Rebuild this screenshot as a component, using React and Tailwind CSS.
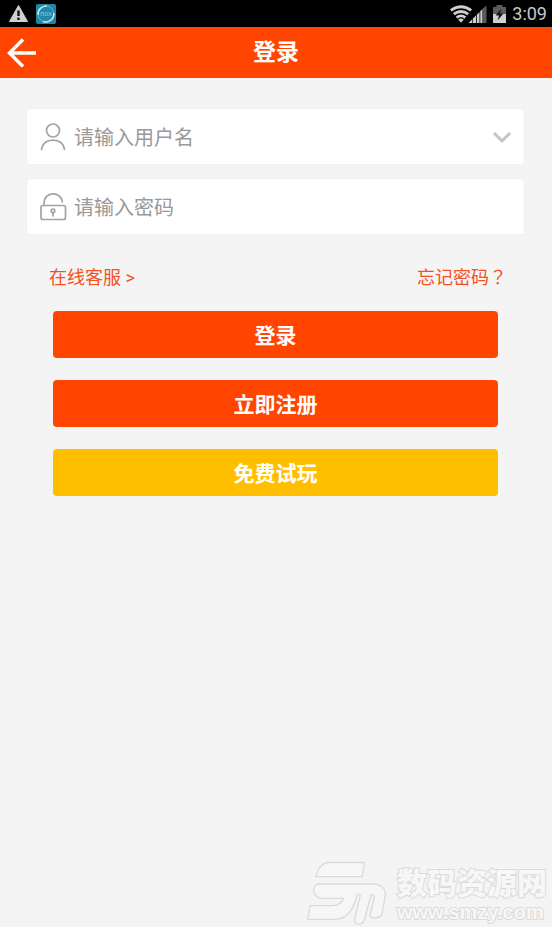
import React, {useState} from "react";

const StatusBar = () => {
    return (
        <div className="flex h-[27px] items-center justify-between bg-black pl-2 pr-[5px]">
            <div className="flex items-center gap-2">
                <svg width="20" height="20" viewBox="0 0 20 20">
                    <path d="M10.5 1.5 L19.5 17.5 H1.5 Z" fill="#d0d0d0" stroke="#d0d0d0" strokeLinejoin="round"/>
                    <path d="M10.5 6.5 V12" stroke="#111" strokeWidth="2.4"/>
                    <rect x="9.3" y="13.6" width="2.4" height="2.4" fill="#111"/>
                </svg>
                <svg width="20" height="20" viewBox="0 0 20 20">
                    <rect width="20" height="20" rx="2" fill="#1f87a3"/>
                    <circle cx="10" cy="10" r="8" fill="#2088a8" stroke="#5fb0c8" strokeWidth="1"/>
                    <path d="M2.2 11 A8 8 0 0 1 11 2 M17.8 9 A8 8 0 0 1 7 17.4" fill="none" stroke="#c3e4ec" strokeWidth="1.6"/>
                    <text x="10" y="12.3" textAnchor="middle" fontSize="7" fill="#8ccbdc" className="font-['Liberation_Sans',sans-serif]">nox</text>
                </svg>
            </div>
            <div className="flex items-center">
                <svg width="22" height="18" viewBox="0 0 22 18" fill="none" stroke="#cfcfcf" strokeWidth="2.8">
                    <path d="M0.8 5.4 Q11 -2 21.2 5.4"/>
                    <path d="M3.8 9.2 Q11 3.8 18.2 9.2"/>
                    <path d="M6.6 12.6 Q11 9.2 15.4 12.6"/>
                    <path d="M8.2 14.4 Q11 12.4 13.8 14.4 L11 17.8 Z" fill="#cfcfcf" stroke="none"/>
                </svg>
                <svg className="-ml-1" width="20" height="18" viewBox="0 0 20 18">
                    <path d="M0.5 18 L4 14.5 V18 Z M4.7 13.8 L8 10.5 V18 H4.7 Z M8.8 9.7 L11.5 7 V18 H8.8 Z" fill="#cfcfcf"/>
                    <path d="M12.3 6.2 L14.5 4 V18 H12.3 Z" fill="#cfcfcf"/>
                    <path d="M14.5 4 L18.5 0.5 V18 H14.5 Z" fill="#5a5a5a"/>
                </svg>
                <svg className="ml-[5px]" width="13" height="18" viewBox="0 0 13 18">
                    <path d="M3.5 0 H9.5 V2 H13 V9 H0 V2 H3.5 Z" fill="#5c5c5c"/>
                    <path d="M0 9 H13 V18 H0 Z" fill="#cfcfcf"/>
                    <path d="M8.5 3.5 L2.5 10.5 H6 L4.5 15.5 L10.5 8.5 H7 Z" fill="#151515"/>
                </svg>
                <span className="ml-[6px] font-['Roboto',sans-serif] text-lg leading-[26px] text-[#c8c8c8]">3:09</span>
            </div>
        </div>
    );
};

const UserIcon = () => (
    <svg width="28" height="28" viewBox="0 0 28 28" fill="none" stroke="#a3a3a3" strokeWidth="1.7" strokeLinecap="round">
        <circle cx="14" cy="7.5" r="6.5"/>
        <path d="M2.5 26.5 C3.5 20.5 8 17.2 14 17.2 C20 17.2 24.5 20.5 25.5 26.5"/>
    </svg>
);

const LockIcon = () => (
    <svg width="28" height="28" viewBox="0 0 28 28" fill="none" stroke="#a3a3a3" strokeWidth="1.7" strokeLinecap="round">
        <rect x="2" y="12.5" width="24.5" height="14" rx="2"/>
        <path d="M5 12.5 V10.5 C5 -2 22 -2 23.4 8.8"/>
        <circle cx="14" cy="17.8" r="1.8"/>
        <path d="M14 19.8 V22.8"/>
    </svg>
);

const Watermark = () => (
    <div className="pointer-events-none absolute right-[5px] bottom-0 flex items-center gap-[9px]">
        <svg width="82" height="66" viewBox="0 0 82 66" fill="#f6f6f6" stroke="#dadada" strokeWidth="1.3" strokeLinejoin="round">
            <path d="M10 15.7 C11 9 15 2.5 22 1.5 H58.5 L56.3 15.7 Z"/>
            <path d="M11.7 23 H66 C75 23 80.5 28 79.3 35 L76 53 C75 57.5 64 58 64 54.5 L68.3 36.5 C68.5 34.5 66 33 65 34 L58.5 58.5 C57 64.5 47.5 65 48.5 58.5 L54.3 34.5 C54.3 33 51.5 33 51 34 C48 46 43 57.5 30 58.3 H1.7 L4.3 44.7 H26.5 C32 44.7 36 41.5 37.5 37.3 H16 C6 36 5.5 26 11.7 23 Z"/>
        </svg>
        <div className="flex flex-col pt-0.5 text-[#f7f7f7] [-webkit-text-stroke:2px_#dadada] [paint-order:stroke_fill]">
            <span className="font-['Liberation_Sans','Noto_Sans_CJK_SC',sans-serif] text-[30px] leading-[34px] font-black">数码资源网</span>
            <span className="font-['Liberation_Sans',sans-serif] text-xl leading-[22px] font-bold">www.smzy.com</span>
        </div>
    </div>
);

const Login = () => {
    const [username, setUsername] = useState("");
    const [password, setPassword] = useState("");

    const handleSubmit = (e) => {
        e.preventDefault();
    };

    const inputClass = "min-w-0 flex-grow bg-transparent pt-0.5 text-xl text-[#333] placeholder:text-[#999] outline-none";
    const rowClass = "flex h-[57px] items-center gap-[7px] rounded-sm border border-[#f0f0f0] bg-white px-3";
    const buttonClass = "h-[47px] w-full rounded pt-0.5 text-[21px] leading-7 font-bold text-white";

    return (
        <div className="relative flex min-h-screen flex-col bg-[#f4f4f4] font-['Roboto','Noto_Sans_CJK_SC',sans-serif]">
            <StatusBar/>
            <header className="grid h-[51px] grid-cols-[1fr_auto_1fr] items-center bg-[#ff4500] px-[7px] text-white">
                <button type="button" aria-label="返回" className="justify-self-start">
                    <svg width="30" height="30" viewBox="0 0 30 30" fill="none" stroke="#fff" strokeWidth="3.4">
                        <path d="M29 15 H2.5 M16 1.5 L2.5 15 L16 28.5"/>
                    </svg>
                </button>
                <h1 className="text-[23px] leading-8 font-bold">登录</h1>
            </header>

            <form onSubmit={handleSubmit} className="pt-[30px] pr-[27px] pl-[26px]">
                <div className="flex flex-col gap-[13px]">
                    <div className={rowClass}>
                        <label htmlFor="username" aria-label="用户名"><UserIcon/></label>
                        <input
                            id="username"
                            type="text"
                            placeholder="请输入用户名"
                            value={username}
                            onChange={(e) => setUsername(e.target.value)}
                            className={inputClass}
                        />
                        <button type="button" aria-label="历史账号">
                            <svg width="20" height="20" viewBox="0 0 20 20" fill="none" stroke="#c4c4c4" strokeWidth="3">
                                <path d="M2 6 L10 14 L18 6"/>
                            </svg>
                        </button>
                    </div>
                    <div className={rowClass}>
                        <label htmlFor="password" aria-label="密码"><LockIcon/></label>
                        <input
                            id="password"
                            type="password"
                            placeholder="请输入密码"
                            value={password}
                            onChange={(e) => setPassword(e.target.value)}
                            className={inputClass}
                        />
                    </div>
                </div>

                <div className="mt-[30px] flex justify-between pr-[18px] pl-[23px] text-lg leading-[26px] text-[#f4511e]">
                    <a href="#service">在线客服 &gt;</a>
                    <a href="#forgot">忘记密码<span className="font-['Roboto','Noto_Sans_CJK_JP',sans-serif]">？</span></a>
                </div>

                <div className="mt-5 flex flex-col gap-[22px] px-[27px]">
                    <button type="submit" className={`${buttonClass} bg-[#ff4500]`}>登录</button>
                    <button type="button" className={`${buttonClass} bg-[#ff4500]`}>立即注册</button>
                    <button type="button" className={`${buttonClass} bg-[#ffbf00]`}>免费试玩</button>
                </div>
            </form>

            <Watermark/>
        </div>
    );
};

const App = () => <Login/>;

export default App;
